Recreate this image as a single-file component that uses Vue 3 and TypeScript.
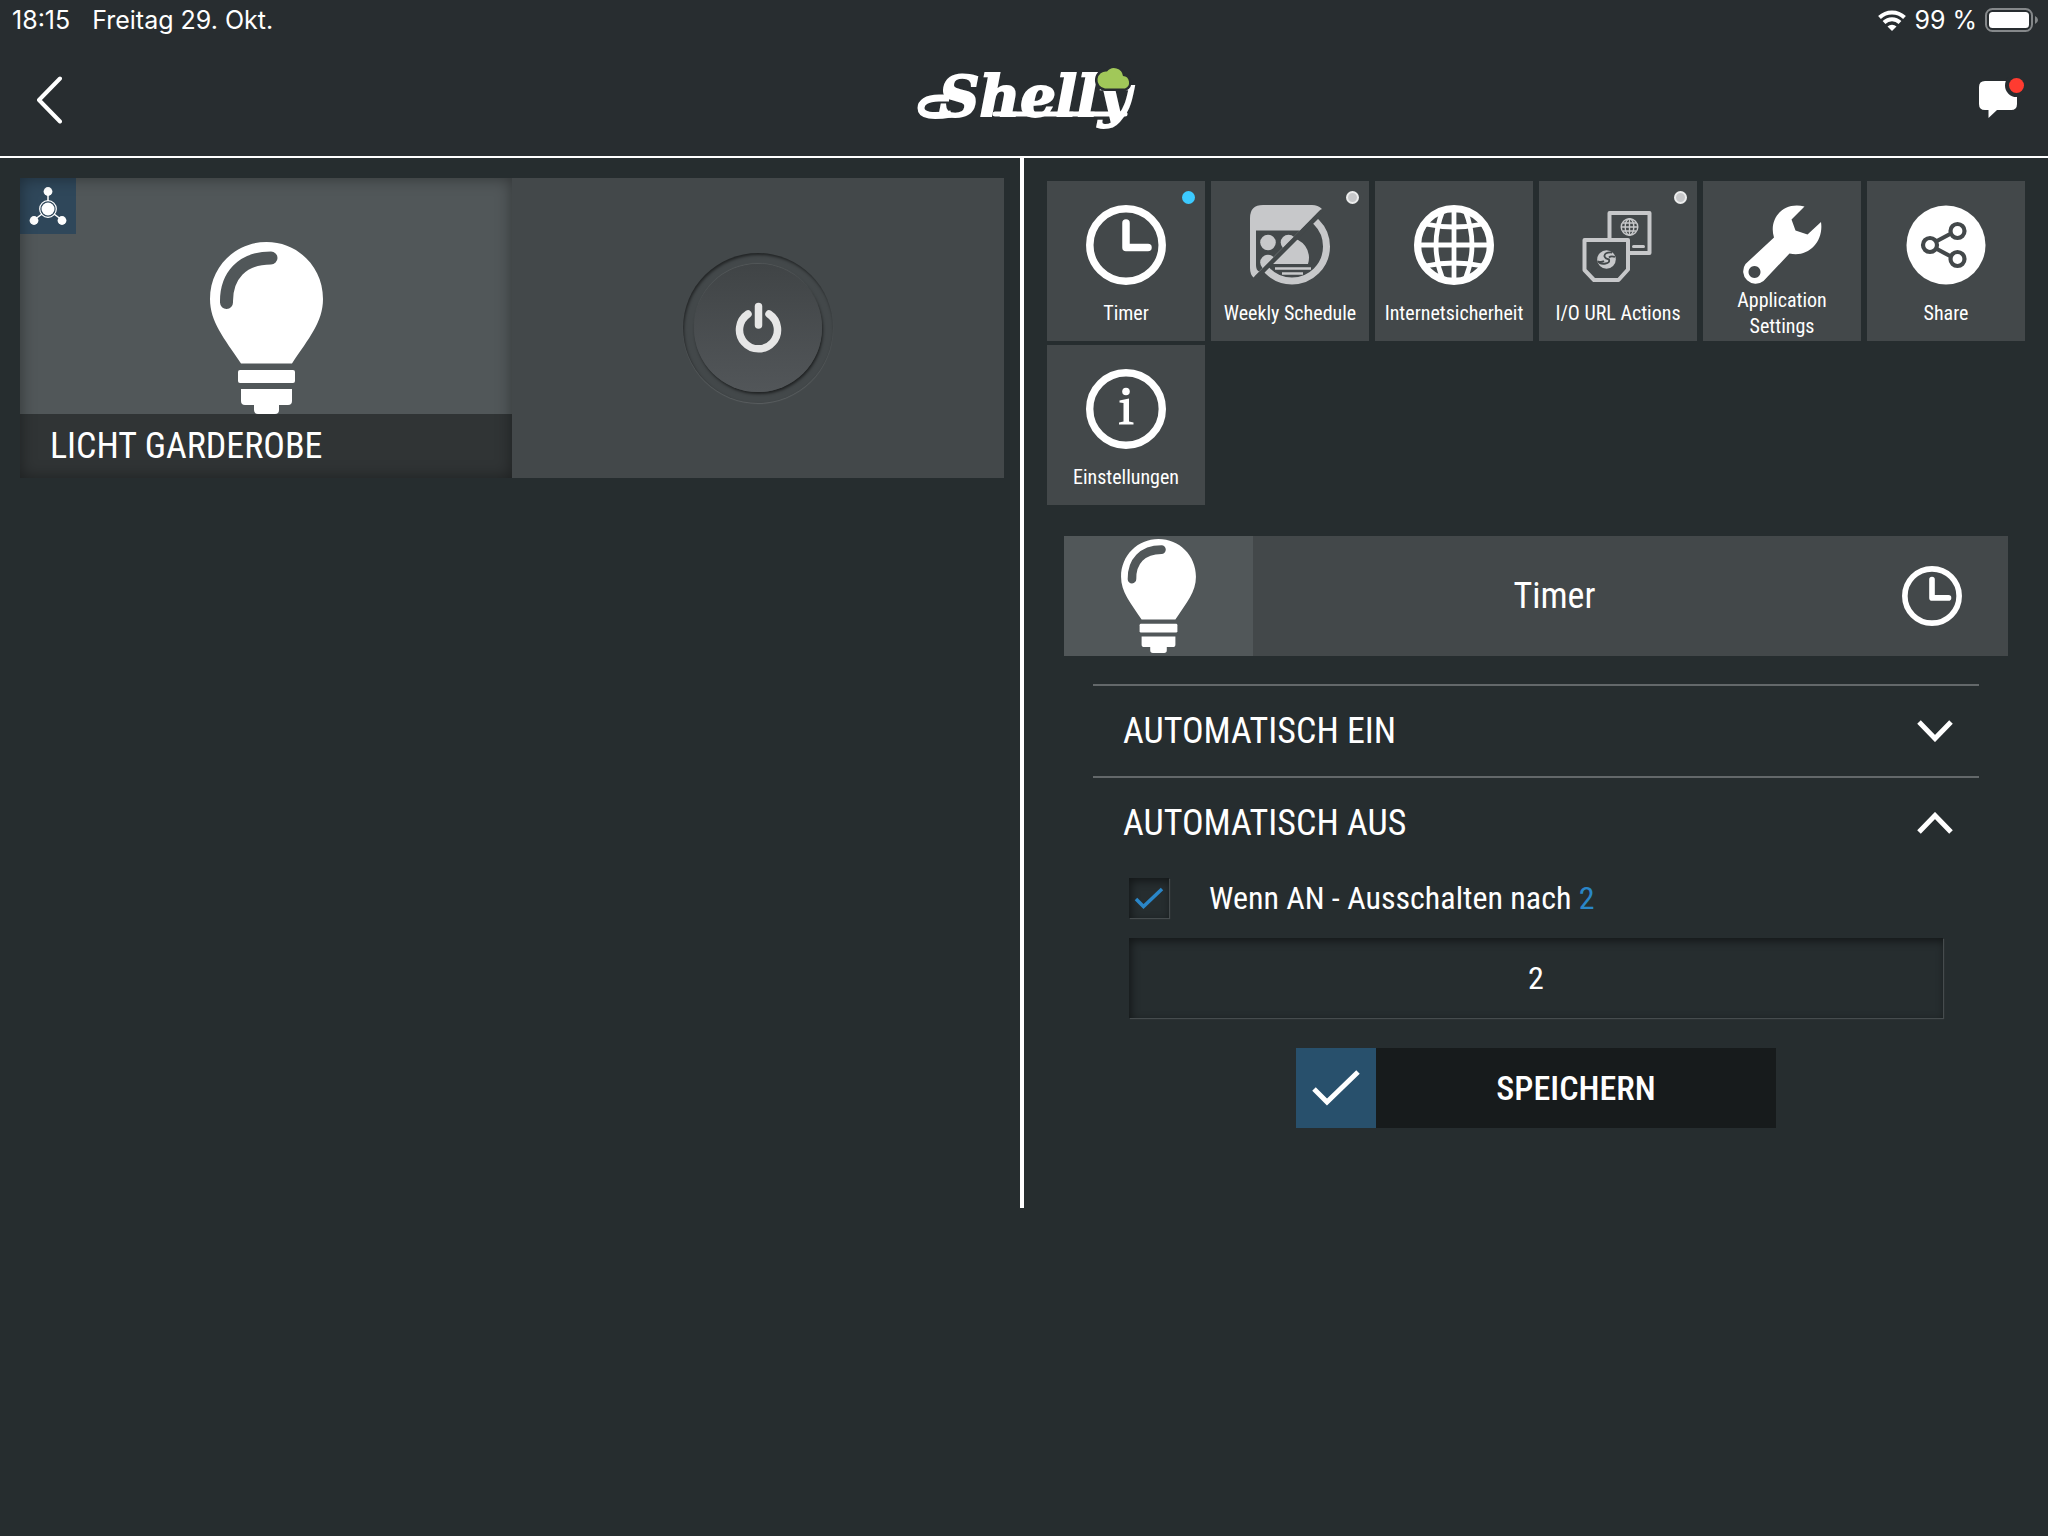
<script setup lang="ts">
import { ref } from 'vue'

type IconName = 'clock' | 'schedule' | 'globe' | 'actions' | 'wrench' | 'share' | 'info'

interface Tile {
  label: string
  icon: IconName
  status?: 'on' | 'off'
}

const tiles: Tile[] = [
  { label: 'Timer', icon: 'clock', status: 'on' },
  { label: 'Weekly Schedule', icon: 'schedule', status: 'off' },
  { label: 'Internetsicherheit', icon: 'globe' },
  { label: 'I/O URL Actions', icon: 'actions', status: 'off' },
  { label: 'Application Settings', icon: 'wrench' },
  { label: 'Share', icon: 'share' },
  { label: 'Einstellungen', icon: 'info' },
]

const autoOnOpen = ref(false)
const autoOffOpen = ref(true)
const autoOffEnabled = ref(true)
const seconds = ref('2')
</script>

<template>
  <div class="app">
    <svg class="defs" aria-hidden="true">
      <symbol id="bulb" viewBox="0 0 113 172">
        <path d="M56.500 0C25 0 0 25 0 57C0 80 14 96 31 121.500H82C99 96 113 80 113 57C113 25 88 0 56.500 0Z" fill="#fff" />
        <path d="M16.500 60.500C16 34 32 16 61 16" fill="none" stroke="#515759" stroke-width="13" stroke-linecap="round" />
        <rect x="28" y="128" width="57" height="13" rx="2" fill="#fff" />
        <path d="M31 147H82V159Q82 163 78 163H69V168Q69 172 65 172H48Q44 172 44 168V163H35Q31 163 31 159Z" fill="#fff" />
      </symbol>
      <symbol id="clock" viewBox="0 0 80 80">
        <g fill="none" stroke="#fff" stroke-width="7.500" stroke-linecap="round" stroke-linejoin="round">
          <circle cx="40" cy="40" r="36.200" />
          <path d="M40 18V42.500H62" />
        </g>
      </symbol>
    </svg>

    <header class="top">
      <div class="status-bar">
        <div class="status-left">
          <span>18:15</span>
          <span>Freitag 29. Okt.</span>
        </div>
        <div class="status-right">
          <svg width="28" height="21" viewBox="0 0 28 21" aria-hidden="true">
            <g fill="none" stroke="#fff" stroke-width="4">
              <path d="M1.500 7.500A18 18 0 0 1 26.500 7.500" />
              <path d="M6 12.500A11.500 11.500 0 0 1 22 12.500" />
            </g>
            <path d="M14 21L9.500 16.500A6.500 6.500 0 0 1 18.500 16.500Z" fill="#fff" />
          </svg>
          <span>99 %</span>
          <svg width="54" height="24" viewBox="0 0 54 24" aria-hidden="true">
            <rect x="1" y="1" width="46" height="22" rx="6.500" fill="none" stroke="#85888a" stroke-width="2" />
            <rect x="4" y="4" width="40" height="16" rx="3.500" fill="#fff" />
            <path d="M50 8Q53 9.500 53 12T50 16Z" fill="#85888a" />
          </svg>
        </div>
      </div>
      <div class="nav">
        <button class="icon-button back" type="button" aria-label="Zurück">
          <svg width="26" height="48" viewBox="0 0 26 48">
            <path d="M24 2.500L3 24L24 45.500" fill="none" stroke="#fff" stroke-width="4" stroke-linecap="round" stroke-linejoin="round" />
          </svg>
        </button>
        <svg class="logo" width="214" height="66" viewBox="0 0 214 66" role="img" aria-label="Shelly">
          <path d="M32 31H22C9 31 4 36 4 41C4 49 16 50 34 47" fill="none" stroke="#fff" stroke-width="7" />
          <text x="22" y="49" class="wordmark">Shelly</text>
          <path d="M78 47H208" stroke="#fff" stroke-width="5" stroke-linecap="round" />
          <path d="M188 21.500A8.500 8.500 0 0 1 190 4.500A9 9 0 0 1 206 9A6.500 6.500 0 0 1 208 21.500Z" fill="#a1c859" stroke="#282d30" stroke-width="5" paint-order="stroke" />
        </svg>
        <button class="icon-button messages" type="button" aria-label="Nachrichten">
          <svg width="45" height="46" viewBox="0 0 45 46">
            <path d="M6 4H33V33H18L9.500 41V33H6Q0 33 0 27V10Q0 4 6 4Z" fill="#fff" />
            <path d="M30 4H38V27Q38 33 32 33H30Z" fill="#fff" />
            <circle cx="37.500" cy="8.500" r="11.500" fill="#282d30" />
            <circle cx="37.500" cy="8.500" r="7.500" fill="#ff3b30" />
          </svg>
        </button>
      </div>
    </header>

    <main class="panes">
      <section class="pane device-pane">
        <article class="device">
          <div class="device-room">
            <div class="device-picture">
              <svg class="bulb-large"><use href="#bulb" /></svg>
            </div>
            <h2 class="device-name">LICHT GARDEROBE</h2>
            <span class="device-tag">
              <svg width="56" height="56" viewBox="0 0 56 56" fill="#fff" stroke="#fff" aria-hidden="true">
                <path d="M28 14V23M22 36L14 42M34 36L42 42" stroke-width="1.500" />
                <circle cx="28" cy="31" r="8.300" fill="none" stroke-width="1.200" />
                <g stroke="none">
                  <circle cx="28" cy="31" r="6.500" />
                  <circle cx="28" cy="13.500" r="4.400" />
                  <circle cx="14" cy="42.500" r="4.400" />
                  <circle cx="42" cy="42.500" r="4.400" />
                </g>
              </svg>
            </span>
          </div>
          <div class="device-switch">
            <button class="power" type="button" aria-label="Licht schalten">
              <span class="power-face">
                <svg width="48" height="52" viewBox="0 0 48 52">
                  <g fill="none" stroke="#e6e6e6" stroke-width="7.500" stroke-linecap="round">
                    <path d="M24.500 4.500V23" />
                    <path d="M14 12A19 19 0 1 0 35 12" />
                  </g>
                </svg>
              </span>
            </button>
          </div>
        </article>
      </section>

      <section class="pane settings-pane">
        <nav class="tiles">
          <button v-for="tile in tiles" :key="tile.label" class="tile" type="button">
            <svg v-if="tile.icon === 'clock'" class="tile-icon"><use href="#clock" /></svg>

            <svg v-else-if="tile.icon === 'schedule'" class="tile-icon" viewBox="0 0 80 80">
              <clipPath id="upper"><path d="M0 0H76L0 76Z" /></clipPath>
              <clipPath id="lower"><path d="M80 2V80H2V80Z" /></clipPath>
              <g clip-path="url(#upper)" fill="#c7c8ca">
                <path fill-rule="evenodd" d="M13 0H62Q68 0 72 4L4 73Q0 70 0 63V13Q0 0 13 0ZM6 25.500V60Q6 65 9 66.500L50 25.500Z" />
                <circle cx="18" cy="37.500" r="7.800" />
                <circle cx="38.500" cy="37.500" r="7.800" />
                <circle cx="18" cy="57.500" r="7.800" />
              </g>
              <g clip-path="url(#lower)">
                <circle cx="42" cy="41.500" r="34.500" fill="none" stroke="#c7c8ca" stroke-width="7" />
                <path d="M20 59A20 20 0 1 1 58 59Z" fill="#c7c8ca" />
                <path d="M25 63.500H61M32 68.500H53" stroke="#c7c8ca" stroke-width="2.600" />
              </g>
              <path d="M72 6L6 73" stroke="#43484a" stroke-width="4" />
            </svg>

            <svg v-else-if="tile.icon === 'globe'" class="tile-icon" viewBox="0 0 80 80">
              <g fill="none" stroke="#fff" stroke-width="4.800">
                <circle cx="40" cy="40" r="36.400" stroke-width="7.200" />
                <path d="M40 4V76M4 40H76M29 5Q15 40 29 75M51 5Q65 40 51 75" />
                <path d="M11 19Q40 25 69 19M11 61Q40 55 69 61" />
              </g>
            </svg>

            <svg v-else-if="tile.icon === 'actions'" class="tile-icon" viewBox="0 0 80 80">
              <g fill="none" stroke="#c7c8ca" stroke-linejoin="round">
                <rect x="31.500" y="8" width="40" height="40" stroke-width="4" />
                <path d="M55.500 41.500H65.500" stroke-width="3" stroke-linecap="round" />
                <g stroke-width="1.400">
                  <circle cx="51.500" cy="22" r="8.300" />
                  <path d="M51.500 14V30M43 22H60M45 18H58M45 26H58" />
                  <ellipse cx="51.500" cy="22" rx="4.300" ry="8.300" />
                </g>
                <path d="M6.500 35H50V64.500L40.500 75H16L6.500 65Z" fill="#43484a" stroke-width="4" />
              </g>
              <circle cx="28.500" cy="54.500" r="9.300" fill="#c7c8ca" />
              <path d="M34 47.500Q26 47 26.500 51.500Q27.500 54 31 54.500Q32 58 27.500 58.500Q22 59.500 20 56M37 52Q33 50.500 31 52.500M26 56Q23.500 57.500 20.500 56.500" fill="none" stroke="#43484a" stroke-width="1.800" />
            </svg>

            <svg v-else-if="tile.icon === 'wrench'" class="tile-icon" viewBox="0 0 80 80">
              <path fill="#fff" fill-rule="evenodd" d="M62.500 1.500L49.500 14.500L53.500 25.500L65.500 29.500L79 17C82 37 66 53 47.500 48.500L21.500 76A12.500 12.500 0 0 1 3.500 59L32 32.500C26 13 42 -4 62.500 1.500ZM12.500 61A6 6 0 1 0 12.510 61Z" />
            </svg>

            <svg v-else-if="tile.icon === 'share'" class="tile-icon" viewBox="0 0 80 80">
              <circle cx="40" cy="40" r="39.500" fill="#fff" />
              <g fill="none" stroke="#43484a" stroke-width="4.200">
                <path d="M30 36.500L45 28.500M30 43.500L45 51.500" />
                <circle cx="24" cy="40" r="7" />
                <circle cx="51.500" cy="26" r="7" />
                <circle cx="51.500" cy="54" r="7" />
              </g>
            </svg>

            <svg v-else class="tile-icon" viewBox="0 0 80 80">
              <circle cx="40" cy="40" r="36.300" fill="none" stroke="#fff" stroke-width="7.400" />
              <circle cx="40" cy="22.500" r="3.800" fill="#fff" />
              <path d="M33.500 31.500L43 29.500V52.500L47.500 53.500V55.500H33V53.500L37.500 52.500V34L33.500 33.500Z" fill="#fff" />
            </svg>

            <span class="tile-label">{{ tile.label }}</span>
            <span v-if="tile.status" class="tile-status" :class="tile.status"></span>
          </button>
        </nav>

        <div class="banner">
          <div class="banner-picture">
            <svg class="bulb-small"><use href="#bulb" /></svg>
          </div>
          <h1 class="banner-title">Timer</h1>
          <div class="banner-icon">
            <svg width="60" height="60"><use href="#clock" /></svg>
          </div>
        </div>

        <div class="accordion">
          <section class="group">
            <button class="group-head" type="button" :aria-expanded="autoOnOpen" @click="autoOnOpen = !autoOnOpen">
              <span>AUTOMATISCH EIN</span>
              <svg width="36" height="22" viewBox="0 0 36 22">
                <path d="M2 2L18 18.500L34 2" fill="none" stroke="#fff" stroke-width="5" />
              </svg>
            </button>
          </section>
          <section class="group">
            <button class="group-head" type="button" :aria-expanded="autoOffOpen" @click="autoOffOpen = !autoOffOpen">
              <span>AUTOMATISCH AUS</span>
              <svg width="36" height="22" viewBox="0 0 36 22">
                <path d="M2 20L18 3.500L34 20" fill="none" stroke="#fff" stroke-width="5" />
              </svg>
            </button>
            <form v-if="autoOffOpen" class="group-body" @submit.prevent>
              <label class="check-row">
                <span class="check">
                  <input v-model="autoOffEnabled" class="check-box" type="checkbox" />
                  <svg v-if="autoOffEnabled" class="check-mark" width="30" height="22" viewBox="0 0 30 22">
                    <path d="M2 12L9.500 19.500L28 2" fill="none" stroke="#2a86c8" stroke-width="3.500" />
                  </svg>
                </span>
                <span>Wenn AN - Ausschalten nach <span class="value">{{ seconds }}</span></span>
              </label>
              <input v-model="seconds" class="seconds" type="text" inputmode="numeric" aria-label="Ausschalten nach" />
              <button class="save" type="submit">
                <span class="save-icon">
                  <svg width="48" height="36" viewBox="0 0 48 36">
                    <path d="M2 19L15 32L46 2" fill="none" stroke="#fff" stroke-width="5" />
                  </svg>
                </span>
                <span class="save-text">SPEICHERN</span>
              </button>
            </form>
          </section>
        </div>
      </section>
    </main>
  </div>
</template>

<style>
body {
  background: #262d2f;
}
</style>

<style scoped>
.app {
  min-height: 100vh;
  background: #262d2f;
  color: #fff;
  font-family: "Roboto Condensed", "Liberation Sans Narrow", Roboto, sans-serif;
}

.app *,
.app *::before {
  box-sizing: border-box;
}

button,
input {
  margin: 0;
  padding: 0;
  border: 0;
  border-radius: 0;
  background: none;
  color: inherit;
  font: inherit;
}

svg {
  display: block;
  flex: none;
}

.defs {
  position: absolute;
  width: 0;
  height: 0;
}

.top {
  background: #282d30;
  border-bottom: 2px solid #fff;
}

.status-bar {
  display: flex;
  align-items: center;
  justify-content: space-between;
  height: 40px;
  padding: 0 9px 0 12px;
  font: 400 25px/40px Inter, sans-serif;
}

.status-left {
  display: flex;
  gap: 22px;
}

.status-right {
  display: flex;
  align-items: center;
  gap: 8px;
}

.nav {
  display: grid;
  grid-template-columns: 1fr auto 1fr;
  align-items: center;
  height: 116px;
  padding: 4px 24px 0;
}

.back {
  justify-self: start;
  padding-left: 12px;
}

.messages {
  justify-self: end;
}

.logo {
  overflow: visible;
}

.wordmark {
  fill: #fff;
  stroke: #fff;
  stroke-width: 2px;
  font: italic 700 56px "DejaVu Serif", serif;
}

.panes {
  display: grid;
  grid-template-columns: 1fr 1fr;
}

.device-pane {
  padding: 20px 16px 0 20px;
  border-right: 4px solid #fff;
}

.settings-pane {
  padding: 23px 23px 80px;
}

.device {
  display: grid;
  grid-template-columns: 1fr 1fr;
  height: 300px;
}

.device-room {
  position: relative;
  display: flex;
  flex-direction: column;
  background: #515759;
}

.device-room::after {
  content: "";
  position: absolute;
  inset: 0;
  box-shadow: inset 0 0 16px rgba(0, 0, 0, 0.4);
}

.device-picture {
  display: flex;
  flex: 1;
  align-items: flex-end;
  justify-content: center;
}

.bulb-large {
  width: 113px;
  height: 172px;
}

.device-name {
  margin: 0;
  padding: 0 30px;
  background: #303435;
  font-size: 36px;
  font-weight: 400;
  line-height: 64px;
}

.device-tag {
  position: absolute;
  top: 0;
  left: 0;
  background: #2f475a;
}

.device-switch {
  display: flex;
  align-items: center;
  justify-content: center;
  background: #43484a;
}

.power {
  display: flex;
  align-items: center;
  justify-content: center;
  width: 150px;
  height: 150px;
  border-radius: 50%;
  box-shadow: inset 1px 2px 3px rgba(0, 0, 0, 0.5), 0 1px 1px rgba(255, 255, 255, 0.12);
}

.power-face {
  display: flex;
  align-items: center;
  justify-content: center;
  width: 128px;
  height: 128px;
  border-radius: 50%;
  background: linear-gradient(#404446, #525659);
  box-shadow: 1px 2px 3px rgba(0, 0, 0, 0.55), 0 -1px 1px rgba(255, 255, 255, 0.1);
}

.tiles {
  display: grid;
  grid-template-columns: repeat(6, 1fr);
  gap: 4px 6px;
}

.tile {
  position: relative;
  display: flex;
  flex-direction: column;
  align-items: center;
  height: 160px;
  padding-top: 24px;
  background: #43484a;
}

.tile-icon {
  width: 80px;
  height: 80px;
}

.tile-label {
  display: flex;
  flex: 1;
  align-items: center;
  max-width: 140px;
  font-size: 20px;
  line-height: 26px;
  text-align: center;
}

.tile-status {
  position: absolute;
  top: 10px;
  right: 10px;
  width: 13px;
  height: 13px;
  border-radius: 50%;
}

.tile-status.on {
  background: #3ccaff;
}

.tile-status.off {
  border: 2px solid #eceded;
  background: #c7c8ca;
}

.banner {
  display: flex;
  height: 120px;
  margin: 31px 17px 28px;
  background: #43484a;
}

.banner-picture {
  display: flex;
  align-items: center;
  justify-content: center;
  width: 20%;
  background: #515759;
}

.bulb-small {
  width: 75px;
  height: 114px;
}

.banner-title {
  flex: 1;
  margin: 0;
  font-size: 36px;
  font-weight: 400;
  line-height: 120px;
  text-align: center;
}

.banner-icon {
  display: flex;
  align-items: center;
  justify-content: center;
  width: 152px;
}

.accordion {
  margin: 0 46px;
}

.group {
  border-top: 2px solid #63686a;
}

.group-head {
  display: flex;
  align-items: center;
  justify-content: space-between;
  width: 100%;
  height: 90px;
  padding: 0 26px 0 30px;
  font-size: 36px;
  line-height: 40px;
}

.group-body {
  display: flex;
  flex-direction: column;
  padding: 10px 36px 0;
}

.check-row {
  display: flex;
  align-items: center;
  gap: 40px;
  height: 40px;
  font-size: 32px;
  line-height: 40px;
}

.check {
  display: grid;
  place-items: center;
  width: 40px;
  height: 40px;
}

.check-box,
.check-mark {
  grid-area: 1 / 1;
}

.check-box {
  width: 40px;
  height: 40px;
  appearance: none;
}

.check-box,
.seconds {
  box-shadow: inset 2px 3px 8px rgba(0, 0, 0, 0.5), 1px 1px 1px rgba(255, 255, 255, 0.15);
}

.value {
  color: #2a86c8;
}

.seconds {
  width: 100%;
  height: 80px;
  margin: 20px 0 30px;
  font-size: 32px;
  text-align: center;
}

.save {
  display: flex;
  align-self: center;
  width: 480px;
  height: 80px;
  background: #171b1c;
  font-size: 34px;
  font-weight: 500;
  line-height: 80px;
}

.save-icon {
  display: flex;
  align-items: center;
  justify-content: center;
  width: 80px;
  height: 80px;
  background: #28506c;
}

.save-text {
  flex: 1;
}
</style>
